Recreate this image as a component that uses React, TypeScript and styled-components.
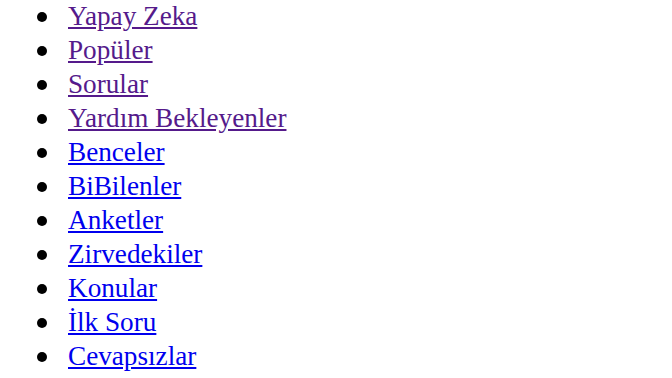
import React from "react";
import styled, { createGlobalStyle } from "styled-components";

const Global = createGlobalStyle`
  html, body { margin: 0; padding: 0; background: #ffffff; }
  body { font-family: "Liberation Serif", "Times New Roman", serif; }
`;

const List = styled.ul`
  margin: -1px 0 0 0;
  padding: 0 0 0 68px;
  list-style: none;
  font-size: 27.2px;
  line-height: 34px;
  color: #000000;
`;

const Item = styled.li`
  position: relative;
  margin: 0;

  &::before {
    content: "";
    position: absolute;
    left: -31px;
    top: 12.5px;
    width: 10px;
    height: 10px;
    border-radius: 50%;
    background: #000000;
  }
`;

const Link = styled.a<{ $visited?: boolean }>`
  color: ${(p) => (p.$visited ? "#551a8b" : "#0000ee")};
  text-decoration: underline;
`;

const items: { label: string; visited: boolean }[] = [
  { label: "Yapay Zeka", visited: true },
  { label: "Popüler", visited: true },
  { label: "Sorular", visited: true },
  { label: "Yardım Bekleyenler", visited: true },
  { label: "Benceler", visited: false },
  { label: "BiBilenler", visited: false },
  { label: "Anketler", visited: false },
  { label: "Zirvedekiler", visited: false },
  { label: "Konular", visited: false },
  { label: "İlk Soru", visited: false },
  { label: "Cevapsızlar", visited: false },
];

export default function App() {
  return (
    <>
      <Global />
      <List>
        {items.map((it) => (
          <Item key={it.label}>
            <Link href="#" $visited={it.visited}>
              {it.label}
            </Link>
          </Item>
        ))}
      </List>
    </>
  );
}
